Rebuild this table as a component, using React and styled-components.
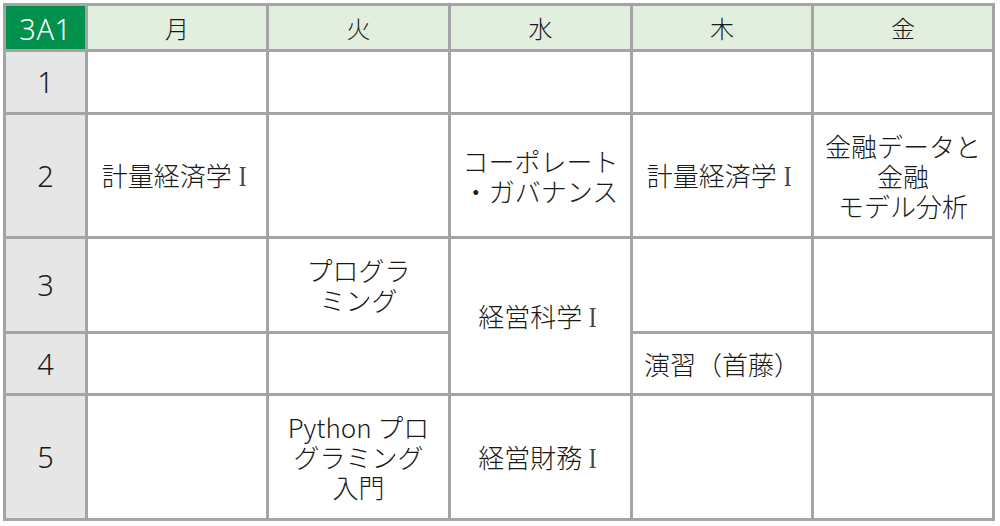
import React from "react";
import styled, { createGlobalStyle } from "styled-components";

const GlobalStyle = createGlobalStyle`
  html, body { margin: 0; padding: 0; background: #ffffff; }
  body { font-family: "Noto Sans CJK JP", "Noto Sans", sans-serif; color: #1a1a1a; }
`;

const Table = styled.div`
  display: grid;
  grid-template-columns: 79px 178px 179px 179px 178px 178px;
  grid-template-rows: 43px 60px 121px 92px 59px 122px;
  gap: 3px;
  padding: 3px;
  margin: 3px 0 0 3px;
  width: max-content;
  background: #a4a4a4;
`;

const Cell = styled.div`
  display: flex;
  align-items: center;
  justify-content: center;
  text-align: center;
  background: #ffffff;
  font-size: 26px;
  line-height: 30px;
  font-weight: 300;
  grid-column: ${(p) => p.$col};
  grid-row: ${(p) => p.$row} / span ${(p) => p.$span || 1};
`;

const Corner = styled(Cell)`
  background: #00914c;
  color: #ffffff;
  font-family: "Noto Sans", "Noto Sans CJK JP", sans-serif;
  font-weight: 300;
  font-size: 29px;
  letter-spacing: 0.5px;
  padding-top: 2px;
`;

const DayHead = styled(Cell)`
  background: #e2efdf;
  font-size: 24px;
`;

const Period = styled(Cell)`
  background: #e6e6e6;
  font-family: "Noto Sans", "Noto Sans CJK JP", sans-serif;
  font-weight: 300;
  font-size: 29px;
`;

const Lines = styled.div`
  display: flex;
  flex-direction: column;
  align-items: center;
`;

const Roman = styled.span`
  display: inline-block;
  font-family: "Liberation Serif", "DejaVu Serif", serif;
  font-size: 29px;
  color: #444444;
  transform: scaleX(0.8);
  padding: 0 5px 0 6px;
`;

const days = ["月", "火", "水", "木", "金"];

const classes = [
  { day: 0, period: 2, lines: ["計量経済学Ⅰ"] },
  { day: 2, period: 2, lines: ["コーポレート", "・ガバナンス"] },
  { day: 3, period: 2, lines: ["計量経済学Ⅰ"] },
  { day: 4, period: 2, lines: ["金融データと", "金融", "モデル分析"] },
  { day: 1, period: 3, lines: ["プログラ", "ミング"] },
  { day: 2, period: 3, span: 2, lines: ["経営科学Ⅰ"] },
  { day: 3, period: 4, lines: ["演習（首藤）"] },
  { day: 1, period: 5, lines: ["Python プロ", "グラミング", "入門"] },
  { day: 2, period: 5, lines: ["経営財務Ⅰ"] },
];

const emptyCells = [];
for (let p = 1; p <= 5; p++) {
  for (let d = 0; d < 5; d++) {
    const covered = classes.some(
      (c) => c.day === d && p >= c.period && p < c.period + (c.span || 1)
    );
    if (!covered) emptyCells.push({ day: d, period: p });
  }
}

function Line({ text }) {
  if (text.endsWith("Ⅰ")) {
    return (
      <span>
        {text.slice(0, -1)}
        <Roman>I</Roman>
      </span>
    );
  }
  return <span>{text}</span>;
}

export default function App() {
  return (
    <>
      <GlobalStyle />
      <Table>
        <Corner $col={1} $row={1}>3A1</Corner>
        {days.map((d, i) => (
          <DayHead key={d} $col={i + 2} $row={1}>
            {d}
          </DayHead>
        ))}
        {[1, 2, 3, 4, 5].map((p) => (
          <Period key={p} $col={1} $row={p + 1}>
            {p}
          </Period>
        ))}
        {classes.map((c, i) => (
          <Cell key={i} $col={c.day + 2} $row={c.period + 1} $span={c.span}>
            <Lines>
              {c.lines.map((l) => (
                <Line key={l} text={l} />
              ))}
            </Lines>
          </Cell>
        ))}
        {emptyCells.map((c) => (
          <Cell key={`${c.day}-${c.period}`} $col={c.day + 2} $row={c.period + 1} />
        ))}
      </Table>
    </>
  );
}
